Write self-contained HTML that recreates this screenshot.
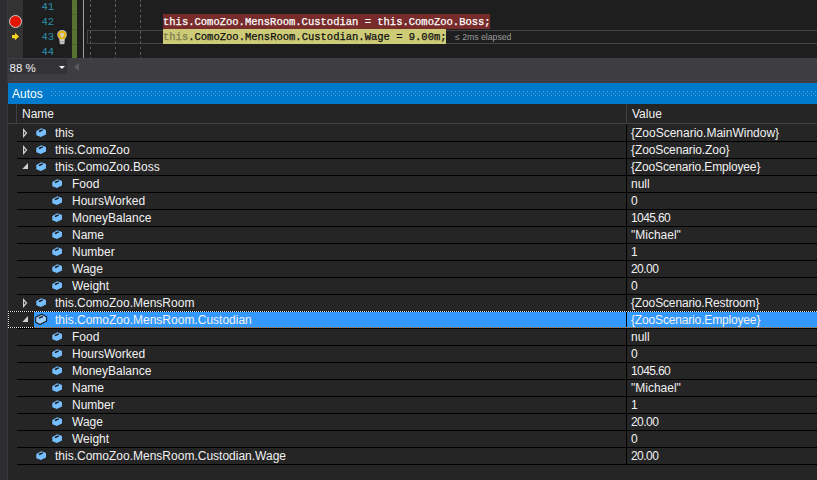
<!DOCTYPE html>
<html><head><meta charset="utf-8">
<style>
*{margin:0;padding:0;box-sizing:border-box}
html,body{width:817px;height:480px;overflow:hidden;background:#2d2d30;font-family:"Liberation Sans",sans-serif;position:relative}
.a{position:absolute}
#editor{left:8px;top:0;width:809px;height:58px;background:#1e1e1e}
#gutter{left:8px;top:0;width:15px;height:58px;background:#333333}
.ln{position:absolute;left:23px;width:31px;text-align:right;font-family:"Liberation Mono",monospace;font-size:10.5px;color:#2b91af;line-height:15px}
.code{position:absolute;font-family:"Liberation Mono",monospace;font-size:10.5px;line-height:15px;white-space:pre;-webkit-text-stroke:0.25px currentColor}
#zoombar{left:8px;top:58px;width:809px;height:25px;background:#3e3e42}
#combo{left:9px;top:59px;width:58px;height:15px;background:#333337}
#hdr{left:8px;top:83px;width:809px;height:21px;background:#007acc}
#grid{left:8px;top:104px;width:809px;height:376px;background:#252526}
.txt{position:absolute;font-size:12px;color:#f1f1f1;white-space:pre;line-height:17px}
.sep{position:absolute;left:17px;width:800px;height:1px;background:#000}
</style></head><body>
<div class="a" style="left:7px;top:0;width:1px;height:83px;background:#3a3a3e"></div>
<div class="a" style="left:7px;top:104px;width:1px;height:376px;background:#3a3a3e"></div>
<div class="a" id="editor"></div>
<div class="a" id="gutter"></div>
<div class="ln" style="top:0px">41</div>
<div class="ln" style="top:15px">42</div>
<div class="ln" style="top:30px">43</div>
<div class="ln" style="top:45px">44</div>
<div class="a" style="left:72px;top:0;width:5px;height:58px;background:#567330"></div>
<div class="a" style="left:72px;top:14px;width:5px;height:1px;background:#4b6529"></div>
<div class="a" style="left:72px;top:29px;width:5px;height:1px;background:#4b6529"></div>
<div class="a" style="left:72px;top:44px;width:5px;height:1px;background:#4b6529"></div>
<div class="a" style="left:83px;top:0;width:1px;height:58px;background:#a0a0a0"></div>
<div class="a" style="left:90px;top:-0.6px;width:1px;height:58.6px;background:repeating-linear-gradient(#5c5c5c 0 2.7px,transparent 2.7px 5.3px)"></div>
<div class="a" style="left:115px;top:-0.6px;width:1px;height:58.6px;background:repeating-linear-gradient(#5c5c5c 0 2.7px,transparent 2.7px 5.3px)"></div>
<div class="a" style="left:140px;top:-0.6px;width:1px;height:58.6px;background:repeating-linear-gradient(#5c5c5c 0 2.7px,transparent 2.7px 5.3px)"></div>
<!-- current line box -->
<div class="a" style="left:87px;top:30px;width:740px;height:14px;border:1px solid #464646"></div>
<div class="a" style="left:163px;top:14px;width:327px;height:15px;background:#772b2b"></div>
<div class="a" style="left:163px;top:29px;width:283px;height:15px;background:#cdca78"></div>
<div class="code" style="left:163px;top:15px;color:#ffffff">this.ComoZoo.MensRoom.Custodian = this.ComoZoo.Boss;</div>
<div class="code" style="left:163px;top:30px;color:#101010"><span style="color:#7d7d4a">this</span>.ComoZoo.MensRoom.Custodian.Wage = 9.00m;</div>
<div class="a" style="left:455px;top:31px;font-size:8.7px;color:#9a9a9a;white-space:pre;line-height:12px">≤ 2ms elapsed</div>
<!-- breakpoint & arrow -->
<svg class="a" style="left:8px;top:14px" width="15" height="30" viewBox="0 0 15 30">
<circle cx="7.5" cy="7.5" r="6" fill="#e51400" stroke="#d0d0d0" stroke-width="1"/>
<path d="M4 21h3v-2.3l4 3.8-4 3.8v-2h-3z" fill="#f7d523"/>
</svg>
<svg class="a" style="left:57px;top:30px" width="11" height="15" viewBox="0 0 11 15">
<path d="M5.1 -0.2C2.3 -0.2 0.2 1.9 0.2 4.6c0 2 1 3.1 2 4.3L2.6 13.2Q2.8 14.2 3.8 14.2h2.6Q7.4 14.2 7.6 13.2L7.9 8.9c1-1.2 2-2.3 2-4.3C10 1.9 7.9 -0.2 5.1 -0.2z" fill="#b0b0b0"/>
<path d="M5.1 0.7C2.9 0.7 1.1 2.4 1.1 4.7c0 1.7 0.9 2.6 1.8 3.7L3.1 9.3h4.1L7.3 8.4c0.9-1.1 1.8-2 1.8-3.7C9.1 2.4 7.3 0.7 5.1 0.7z" fill="#e6b400"/>
<path d="M5.1 2.7C4 2.7 3.1 3.5 3.1 4.6c0 0.9 0.5 1.4 1.1 2.1V7.5h1.8V6.7c0.6-0.7 1.1-1.2 1.1-2.1C7.1 3.5 6.2 2.7 5.1 2.7z" fill="#d2cdb8"/>
<rect x="3.4" y="9.3" width="3.5" height="4.2" fill="#d4d4d4"/>
<rect x="3.4" y="11.4" width="3.5" height="0.8" fill="#808080"/>
</svg>
<div class="a" id="zoombar"></div>
<div class="a" style="left:8px;top:58px;width:809px;height:1px;background:#3f3f46"></div>
<div class="a" id="combo"></div>
<div class="a" style="left:9.5px;top:59.5px;font-size:11.5px;color:#f1f1f1;line-height:17px">88 %</div>
<div class="a" style="left:59px;top:66px;width:0;height:0;border-left:3px solid transparent;border-right:3px solid transparent;border-top:3px solid #f1f1f1"></div>
<div class="a" style="left:74px;top:63px;width:0;height:0;border-top:4px solid transparent;border-bottom:4px solid transparent;border-right:5px solid #5a5a5e"></div>
<div class="a" id="hdr"></div>
<div class="a" style="left:12px;top:86px;font-size:12px;color:#ffffff;line-height:17px">Autos</div>
<svg class="a" style="left:51px;top:91px" width="766" height="5"><defs><pattern id="dp" width="4" height="4" patternUnits="userSpaceOnUse"><rect x="0" y="0" width="1" height="1" fill="#5ea4dc"/><rect x="2" y="2" width="1" height="1" fill="#5ea4dc"/></pattern></defs><rect width="766" height="5" fill="url(#dp)"/></svg>
<div class="a" id="grid"></div>
<div class="a" style="left:16px;top:104px;width:1px;height:19px;background:#3f3f46"></div>
<div class="a" style="left:8px;top:123px;width:809px;height:1px;background:#3f3f46"></div>
<div class="a" style="left:626px;top:104px;width:1px;height:19px;background:#3f3f46"></div>
<div class="txt" style="left:22px;top:106px">Name</div>
<div class="txt" style="left:632px;top:106px">Value</div>
<div id="rows">
<svg class="a" style="left:22px;top:128px" width="7" height="10"><path d="M1.6 1.6L4.6 5L1.6 8.4Z" fill="none" stroke="#cfcfcf" stroke-width="1.2" stroke-linejoin="miter"/></svg>
<svg class="a" style="left:36px;top:128px" width="11" height="10"><path d="M0.3 3L5.3 0.2L10 1.9L10 6.5L4.8 9L0.3 7.2Z" fill="#75beff" stroke-linejoin="round"/><path d="M3.6 3.3L6.1 2.1" stroke="#1e1e1e" stroke-width="1.6" stroke-linecap="round"/></svg>
<div class="txt" style="left:55px;top:125px">this</div>
<div class="txt" style="left:631px;top:125px">{ZooScenario.MainWindow}</div>
<div class="sep" style="top:141px"></div>
<svg class="a" style="left:22px;top:145px" width="7" height="10"><path d="M1.6 1.6L4.6 5L1.6 8.4Z" fill="none" stroke="#cfcfcf" stroke-width="1.2" stroke-linejoin="miter"/></svg>
<svg class="a" style="left:36px;top:145px" width="11" height="10"><path d="M0.3 3L5.3 0.2L10 1.9L10 6.5L4.8 9L0.3 7.2Z" fill="#75beff" stroke-linejoin="round"/><path d="M3.6 3.3L6.1 2.1" stroke="#1e1e1e" stroke-width="1.6" stroke-linecap="round"/></svg>
<div class="txt" style="left:55px;top:142px">this.ComoZoo</div>
<div class="txt" style="left:631px;top:142px;letter-spacing:-0.1px">{ZooScenario.Zoo}</div>
<div class="sep" style="top:158px"></div>
<svg class="a" style="left:22px;top:163px" width="7" height="7"><path d="M6 0L6 6L0.3 6Z" fill="#d0d0d0"/></svg>
<svg class="a" style="left:36px;top:162px" width="11" height="10"><path d="M0.3 3L5.3 0.2L10 1.9L10 6.5L4.8 9L0.3 7.2Z" fill="#75beff" stroke-linejoin="round"/><path d="M3.6 3.3L6.1 2.1" stroke="#1e1e1e" stroke-width="1.6" stroke-linecap="round"/></svg>
<div class="txt" style="left:55px;top:159px">this.ComoZoo.Boss</div>
<div class="txt" style="left:631px;top:159px;letter-spacing:-0.16px">{ZooScenario.Employee}</div>
<div class="sep" style="top:175px"></div>
<svg class="a" style="left:52px;top:179px" width="11" height="10"><path d="M0.3 3L5.3 0.2L10 1.9L10 6.5L4.8 9L0.3 7.2Z" fill="#75beff" stroke-linejoin="round"/><path d="M3.6 3.3L6.1 2.1" stroke="#1e1e1e" stroke-width="1.6" stroke-linecap="round"/></svg>
<div class="txt" style="left:72px;top:176px">Food</div>
<div class="txt" style="left:631px;top:176px">null</div>
<div class="sep" style="top:192px"></div>
<svg class="a" style="left:52px;top:196px" width="11" height="10"><path d="M0.3 3L5.3 0.2L10 1.9L10 6.5L4.8 9L0.3 7.2Z" fill="#75beff" stroke-linejoin="round"/><path d="M3.6 3.3L6.1 2.1" stroke="#1e1e1e" stroke-width="1.6" stroke-linecap="round"/></svg>
<div class="txt" style="left:72px;top:193px">HoursWorked</div>
<div class="txt" style="left:631px;top:193px">0</div>
<div class="sep" style="top:209px"></div>
<svg class="a" style="left:52px;top:213px" width="11" height="10"><path d="M0.3 3L5.3 0.2L10 1.9L10 6.5L4.8 9L0.3 7.2Z" fill="#75beff" stroke-linejoin="round"/><path d="M3.6 3.3L6.1 2.1" stroke="#1e1e1e" stroke-width="1.6" stroke-linecap="round"/></svg>
<div class="txt" style="left:72px;top:210px">MoneyBalance</div>
<div class="txt" style="left:631px;top:210px;letter-spacing:-0.6px">1045.60</div>
<div class="sep" style="top:226px"></div>
<svg class="a" style="left:52px;top:230px" width="11" height="10"><path d="M0.3 3L5.3 0.2L10 1.9L10 6.5L4.8 9L0.3 7.2Z" fill="#75beff" stroke-linejoin="round"/><path d="M3.6 3.3L6.1 2.1" stroke="#1e1e1e" stroke-width="1.6" stroke-linecap="round"/></svg>
<div class="txt" style="left:72px;top:227px">Name</div>
<div class="txt" style="left:631px;top:227px">"Michael"</div>
<div class="sep" style="top:243px"></div>
<svg class="a" style="left:52px;top:247px" width="11" height="10"><path d="M0.3 3L5.3 0.2L10 1.9L10 6.5L4.8 9L0.3 7.2Z" fill="#75beff" stroke-linejoin="round"/><path d="M3.6 3.3L6.1 2.1" stroke="#1e1e1e" stroke-width="1.6" stroke-linecap="round"/></svg>
<div class="txt" style="left:72px;top:244px">Number</div>
<div class="txt" style="left:631px;top:244px">1</div>
<div class="sep" style="top:260px"></div>
<svg class="a" style="left:52px;top:264px" width="11" height="10"><path d="M0.3 3L5.3 0.2L10 1.9L10 6.5L4.8 9L0.3 7.2Z" fill="#75beff" stroke-linejoin="round"/><path d="M3.6 3.3L6.1 2.1" stroke="#1e1e1e" stroke-width="1.6" stroke-linecap="round"/></svg>
<div class="txt" style="left:72px;top:261px">Wage</div>
<div class="txt" style="left:631px;top:261px;letter-spacing:-0.55px">20.00</div>
<div class="sep" style="top:277px"></div>
<svg class="a" style="left:52px;top:281px" width="11" height="10"><path d="M0.3 3L5.3 0.2L10 1.9L10 6.5L4.8 9L0.3 7.2Z" fill="#75beff" stroke-linejoin="round"/><path d="M3.6 3.3L6.1 2.1" stroke="#1e1e1e" stroke-width="1.6" stroke-linecap="round"/></svg>
<div class="txt" style="left:72px;top:278px">Weight</div>
<div class="txt" style="left:631px;top:278px">0</div>
<div class="sep" style="top:294px"></div>
<svg class="a" style="left:22px;top:298px" width="7" height="10"><path d="M1.6 1.6L4.6 5L1.6 8.4Z" fill="none" stroke="#cfcfcf" stroke-width="1.2" stroke-linejoin="miter"/></svg>
<svg class="a" style="left:36px;top:298px" width="11" height="10"><path d="M0.3 3L5.3 0.2L10 1.9L10 6.5L4.8 9L0.3 7.2Z" fill="#75beff" stroke-linejoin="round"/><path d="M3.6 3.3L6.1 2.1" stroke="#1e1e1e" stroke-width="1.6" stroke-linecap="round"/></svg>
<div class="txt" style="left:55px;top:295px">this.ComoZoo.MensRoom</div>
<div class="txt" style="left:631px;top:295px;letter-spacing:-0.14px">{ZooScenario.Restroom}</div>
<div class="sep" style="top:311px"></div>
<div class="a" style="left:34px;top:311px;width:783px;height:17px;background:#3399ff"></div>
<svg class="a" style="left:22px;top:316px" width="7" height="7"><path d="M6 0L6 6L0.3 6Z" fill="#d0d0d0"/></svg>
<svg class="a" style="left:36px;top:315px;overflow:visible" width="11" height="10"><path d="M-0.3 2.2L5.6 -0.7L10.6 1.7L10.6 6.0L4 9.6L-0.3 7.3Z" fill="#9ccfff" stroke="#1a1a1a" stroke-width="1.1" stroke-linejoin="round"/><path d="M3.5 2.9L6.3 1.7" stroke="#1a1a1a" stroke-width="1.5" stroke-linecap="round"/></svg>
<div class="txt" style="left:55px;top:312px">this.ComoZoo.MensRoom.Custodian</div>
<div class="txt" style="left:631px;top:312px;letter-spacing:-0.16px">{ZooScenario.Employee}</div>
<div class="sep" style="top:328px"></div>
<svg class="a" style="left:52px;top:332px" width="11" height="10"><path d="M0.3 3L5.3 0.2L10 1.9L10 6.5L4.8 9L0.3 7.2Z" fill="#75beff" stroke-linejoin="round"/><path d="M3.6 3.3L6.1 2.1" stroke="#1e1e1e" stroke-width="1.6" stroke-linecap="round"/></svg>
<div class="txt" style="left:72px;top:329px">Food</div>
<div class="txt" style="left:631px;top:329px">null</div>
<div class="sep" style="top:345px"></div>
<svg class="a" style="left:52px;top:349px" width="11" height="10"><path d="M0.3 3L5.3 0.2L10 1.9L10 6.5L4.8 9L0.3 7.2Z" fill="#75beff" stroke-linejoin="round"/><path d="M3.6 3.3L6.1 2.1" stroke="#1e1e1e" stroke-width="1.6" stroke-linecap="round"/></svg>
<div class="txt" style="left:72px;top:346px">HoursWorked</div>
<div class="txt" style="left:631px;top:346px">0</div>
<div class="sep" style="top:362px"></div>
<svg class="a" style="left:52px;top:366px" width="11" height="10"><path d="M0.3 3L5.3 0.2L10 1.9L10 6.5L4.8 9L0.3 7.2Z" fill="#75beff" stroke-linejoin="round"/><path d="M3.6 3.3L6.1 2.1" stroke="#1e1e1e" stroke-width="1.6" stroke-linecap="round"/></svg>
<div class="txt" style="left:72px;top:363px">MoneyBalance</div>
<div class="txt" style="left:631px;top:363px;letter-spacing:-0.6px">1045.60</div>
<div class="sep" style="top:379px"></div>
<svg class="a" style="left:52px;top:383px" width="11" height="10"><path d="M0.3 3L5.3 0.2L10 1.9L10 6.5L4.8 9L0.3 7.2Z" fill="#75beff" stroke-linejoin="round"/><path d="M3.6 3.3L6.1 2.1" stroke="#1e1e1e" stroke-width="1.6" stroke-linecap="round"/></svg>
<div class="txt" style="left:72px;top:380px">Name</div>
<div class="txt" style="left:631px;top:380px">"Michael"</div>
<div class="sep" style="top:396px"></div>
<svg class="a" style="left:52px;top:400px" width="11" height="10"><path d="M0.3 3L5.3 0.2L10 1.9L10 6.5L4.8 9L0.3 7.2Z" fill="#75beff" stroke-linejoin="round"/><path d="M3.6 3.3L6.1 2.1" stroke="#1e1e1e" stroke-width="1.6" stroke-linecap="round"/></svg>
<div class="txt" style="left:72px;top:397px">Number</div>
<div class="txt" style="left:631px;top:397px">1</div>
<div class="sep" style="top:413px"></div>
<svg class="a" style="left:52px;top:417px" width="11" height="10"><path d="M0.3 3L5.3 0.2L10 1.9L10 6.5L4.8 9L0.3 7.2Z" fill="#75beff" stroke-linejoin="round"/><path d="M3.6 3.3L6.1 2.1" stroke="#1e1e1e" stroke-width="1.6" stroke-linecap="round"/></svg>
<div class="txt" style="left:72px;top:414px">Wage</div>
<div class="txt" style="left:631px;top:414px;letter-spacing:-0.55px">20.00</div>
<div class="sep" style="top:430px"></div>
<svg class="a" style="left:52px;top:434px" width="11" height="10"><path d="M0.3 3L5.3 0.2L10 1.9L10 6.5L4.8 9L0.3 7.2Z" fill="#75beff" stroke-linejoin="round"/><path d="M3.6 3.3L6.1 2.1" stroke="#1e1e1e" stroke-width="1.6" stroke-linecap="round"/></svg>
<div class="txt" style="left:72px;top:431px">Weight</div>
<div class="txt" style="left:631px;top:431px">0</div>
<div class="sep" style="top:447px"></div>
<svg class="a" style="left:36px;top:451px" width="11" height="10"><path d="M0.3 3L5.3 0.2L10 1.9L10 6.5L4.8 9L0.3 7.2Z" fill="#75beff" stroke-linejoin="round"/><path d="M3.6 3.3L6.1 2.1" stroke="#1e1e1e" stroke-width="1.6" stroke-linecap="round"/></svg>
<div class="txt" style="left:55px;top:448px">this.ComoZoo.MensRoom.Custodian.Wage</div>
<div class="txt" style="left:631px;top:448px;letter-spacing:-0.55px">20.00</div>
<div class="sep" style="top:464px"></div>
<div class="a" style="left:626px;top:124px;width:1px;height:340px;background:#000"></div>
<div class="a" style="left:8px;top:311px;width:809px;height:1px;background:repeating-linear-gradient(90deg,#e8e8e8 0 1px,#000 1px 2px)"></div>
<div class="a" style="left:8px;top:327px;width:26px;height:1px;background:repeating-linear-gradient(90deg,#e8e8e8 0 1px,#000 1px 2px)"></div>
<div class="a" style="left:34px;top:327px;width:783px;height:1px;background:repeating-linear-gradient(90deg,#cc6600 0 1px,#3399ff 1px 2px)"></div>
<div class="a" style="left:8px;top:311px;width:1px;height:17px;background:repeating-linear-gradient(180deg,#e8e8e8 0 1px,#000 1px 2px)"></div>
</div>
</body></html>
